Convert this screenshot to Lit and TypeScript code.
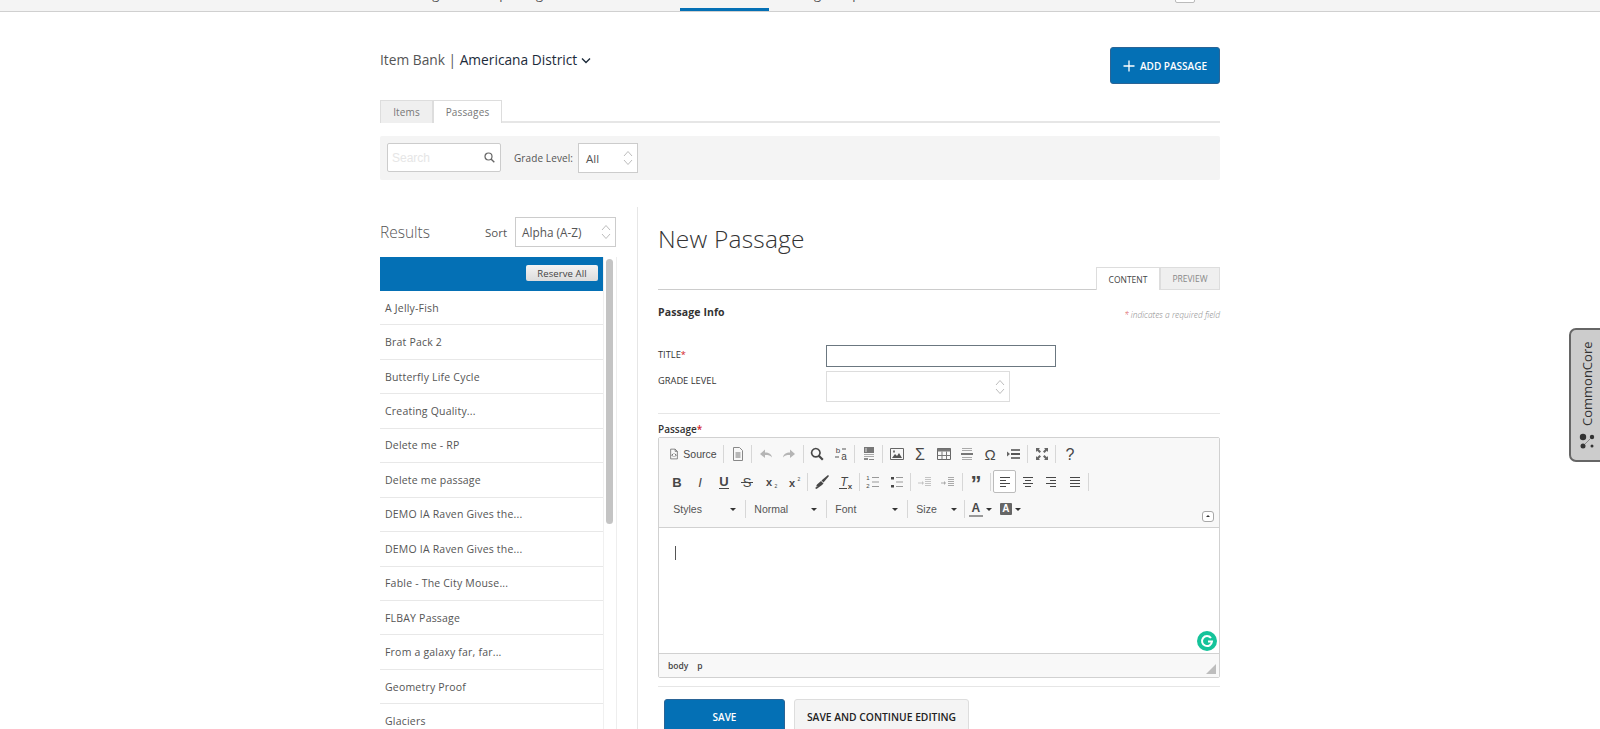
import { LitElement, html, css, svg } from "lit";
import { customElement } from "lit/decorators.js";

const ic = (body: unknown, cls = "") =>
  html`<svg class="ic ${cls}" viewBox="0 0 16 16" width="16" height="16">${body}</svg>`;
const L = (d: string, c = "#474747", w = 1) => svg`<path d=${d} fill="none" stroke=${c} stroke-width=${w}/>`;
const F = (d: string, c = "#474747") => svg`<path d=${d} fill=${c}/>`;
const T = (t: string, x: number, y: number, size: number, weight = "700", style = "normal", deco = "none") =>
  svg`<text x=${x} y=${y} font-size=${size} font-weight=${weight} font-style=${style} text-decoration=${deco} text-anchor="middle" font-family="Liberation Sans, sans-serif" fill="#474747">${t}</text>`;

const GREY = "#b5b5b5";
const icons: Record<string, unknown> = {
  source: ic([L("M3.5 1.5h6l3 3v10h-9z", "#666"), L("M9.5 1.5v3h3", "#666"), L("M7 7.5l-2 2 2 2M9 7.5l2 2-2 2", "#333")]),
  doc: ic([L("M3.5 1.5h6l3 3v10h-9z", "#888"), L("M5.5 7h5M5.5 9h5M5.5 11h5", "#777")]),
  undo: ic(F("M2 8l5-4.5v3c4 0 6.5 1.5 7 5-1.5-2-3.500-2.500-7-2.500v3z", GREY)),
  redo: ic(F("M14 8l-5-4.5v3c-4 0-6.500 1.500-7 5 1.500-2 3.500-2.500 7-2.500v3z", GREY)),
  search: ic([L("M6.800 2.500a4.200 4.200 0 1 0 .01 0z", "#474747", 1.6), L("M9.800 9.800l4 4", "#474747", 2.2)]),
  replace: ic([T("b", 5, 7, 8, "400"), T("a", 11, 14, 10, "400"), L("M9 3h4M2 11h4", "#555")]),
  blocks: ic([F("M3 1h10v6H3z", "#777"), F("M3 8h10v1H3zM3 10h10v1H3z", "#aaa"), F("M3 12h4v2H3zM8 13h5v1H8z", "#888"), F("M4 2.500h2v1H4zM4 4.500h2v1H4z", "#ddd")]),
  image: ic([L("M1.500 2.500h13v11h-13z", "#666"), F("M3 12l3-4 2 2 2-3 3 5z", "#555"), F("M4 4.500h2v2H4z", "#777")]),
  sigma: ic(T("Σ", 8, 14, 16, "400")),
  table: ic([L("M1.500 2.500h13v11h-13z", "#666"), F("M1.500 2.500h13v3h-13z", "#777"), L("M1.500 9.500h13M6 5.500v8M10.500 5.500v8", "#777")]),
  hr: ic([F("M3 2h10v1H3zM3 4h10v1H3z", "#aaa"), F("M2 7h12v2H2z", "#777"), F("M3 11h10v1H3zM3 13h10v1H3z", "#aaa")]),
  omega: ic(T("Ω", 8, 14, 15, "400")),
  pagebreak: ic([F("M5 3h9v2H5zM5 11h9v2H5z", "#777"), F("M5 7h9v2H5z", "#555"), F("M1 5.500l3 2.500-3 2.500z", "#666")]),
  max: ic([F("M2 2h4L4.800 3.200 7 5.500 5.500 7 3.200 4.800 2 6zM14 2v4l-1.200-1.200L10.500 7 9 5.500l2.200-2.300L10 2zM2 14v-4l1.200 1.200L5.500 9 7 10.500l-2.200 2.300L6 14zM14 14h-4l1.200-1.200L9 10.500 10.500 9l2.300 2.200L14 10z", "#666")]),
  help: ic(T("?", 8, 14, 16, "400")),
  b: ic(T("B", 8, 13, 13)),
  i: ic(T("I", 8, 13, 13, "400", "italic")),
  u: ic([T("U", 8, 12, 13), F("M3 14h10v1H3z")]),
  s: ic([T("S", 8, 13, 13, "400"), F("M2 8h12v1H2z")]),
  sub: ic([T("x", 6, 12, 11), T("2", 13, 14, 5, "400")]),
  sup: ic([T("x", 6, 13, 11), T("2", 13, 7, 5, "400")]),
  brush: ic([F("M14 1l1 1-5.500 6.500-2-2z"), F("M7 7l2.500 2.500-1.500 1.500L2.500 15 1 14l3-2-2 .500 1-2z")]),
  tx: ic([T("T", 7, 12, 12, "400", "italic"), F("M2 14h8v1H2z"), T("x", 13, 15, 8)]),
  ol: ic([F("M7 3h7v1H7zM7 7.500h7v1H7zM7 12h7v1H7z", "#999"), T("1", 3, 6, 6, "400"), T("2", 3, 14, 6, "400")]),
  ul: ic([F("M7 3h7v1H7zM7 7.500h7v1H7zM7 12h7v1H7z", "#999"), F("M2 3h3v2.500H2zM2 11h3v2.500H2z")]),
  outdent: ic([F("M8 3h6v1H8zM8 5h6v1H8zM8 7h6v1H8zM8 9h6v1H8zM8 11h6v1H8zM1 8.500h5v1H1z", "#c4c4c4"), F("M5 7v4l2-2z", "#c4c4c4")]),
  indent: ic([F("M8 3h6v1H8zM8 5h6v1H8zM8 7h6v1H8zM8 9h6v1H8zM8 11h6v1H8zM1 8.500h4v1H1z", "#aaa"), F("M4 7v4l2-2z", "#aaa")]),
  quote: ic(T("”", 8, 17, 22, "700")),
  left: ic(F("M3 3h10v1H3zM3 6h6v1H3zM3 9h10v1H3zM3 12h6v1H3z")),
  center: ic(F("M3 3h10v1H3zM5 6h6v1H5zM3 9h10v1H3zM5 12h6v1H5z")),
  right: ic(F("M3 3h10v1H3zM7 6h6v1H7zM3 9h10v1H3zM7 12h6v1H7z")),
  justify: ic(F("M3 3h10v1H3zM3 6h10v1H3zM3 9h10v1H3zM3 12h10v1H3z")),
};

const row1 = ["source*", "|", "doc", "|", "undo", "redo", "|", "search", "replace", "|", "blocks", "|", "image", "sigma", "table", "hr", "omega", "pagebreak", "|", "max", "|", "help"];
const row2 = ["b", "i", "u", "s", "sub", "sup", "|", "brush", "tx", "|", "ol", "ul", "|", "outdent", "indent", "|", "quote", "|", "left", "center", "right", "justify", "|"];

const rows = ["A Jelly-Fish", "Brat Pack 2", "Butterfly Life Cycle", "Creating Quality...", "Delete me - RP", "Delete me passage", "DEMO IA Raven Gives the...", "DEMO IA Raven Gives the...", "Fable - The City Mouse...", "FLBAY Passage", "From a galaxy far, far...", "Geometry Proof", "Glaciers"];

const nav = [
  ["Manage", 85], ["Reporting", 97], ["Assessments", 118], ["Item Bank", 89], ["Insight Reports", 139],
] as const;

const arrows = html`<svg class="arrows" viewBox="0 0 10 18" width="10" height="18">
  <path d="M1 7l4-4.500L9 7M1 11l4 4.500L9 11" fill="none" stroke="#bdbdbd" stroke-width="1"/></svg>`;

@customElement("app-root")
export class AppRoot extends LitElement {
  static styles = css`
    :host { display: block; position: relative; height: 729px; overflow: hidden; background: #fff; font-family: "Open Sans", sans-serif; color: #444; }
    * { box-sizing: border-box; }
    .nav { height: 12px; background: #f4f4f4; border-bottom: 1px solid #d0d0d0; position: relative; overflow: hidden; }
    .nav-in { width: 840px; margin-left: 380px; height: 11px; display: flex; align-items: flex-end; }
    .nav-item { flex: none; height: 11px; display: flex; justify-content: center; align-items: flex-end; padding-bottom: 8px; font-size: 13px; line-height: 18px; color: #555; white-space: nowrap; position: relative; }
    .nav-item.on::after { content: ""; position: absolute; left: 0; right: 0; bottom: 0; height: 3px; background: #0470b5; }
    .nav-box { position: absolute; left: 1175px; top: -6px; width: 20px; height: 9px; border: 1px solid #bbb; border-radius: 2px; background: #fff; }
    .page { width: 840px; margin-left: 380px; }
    .head { display: flex; justify-content: space-between; align-items: flex-start; padding-top: 35px; height: 88px; }
    .crumb { font-size: 13.750px; line-height: 20px; margin-top: 3px; color: #555; display: flex; align-items: center; white-space: pre; }
    .crumb b { font-weight: 400; color: #1c2b3a; }
    .crumb svg { margin-left: 4px; }
    .add { width: 110px; height: 37px; background: #0470b5; border: 1px solid #2a6496; border-radius: 3px; color: #fff; font-size: 10px; font-weight: 600; display: flex; align-items: center; justify-content: center; gap: 5px; }
    .tabs { display: flex; height: 23px; border-bottom: 2px solid #e6e6e6; }
    .tabs div { font-size: 10px; display: flex; align-items: center; justify-content: center; color: #777; letter-spacing: .15px; }
    .t-off { width: 53px; background: #efefef; border: 1px solid #ddd; border-bottom: none; height: 23px; }
    .t-on { width: 69px; background: #fff; border: 1px solid #ddd; border-bottom: none; height: 23px; padding-bottom: 1px; }
    .filter { margin-top: 13px; height: 44px; background: #f4f4f4; border-radius: 2px; padding: 7px; display: flex; align-items: flex-start; }
    .search { width: 114px; height: 29px; background: #fff; border: 1px solid #ccc; border-radius: 2px; display: flex; align-items: center; justify-content: space-between; padding: 0 5px 0 4px; font: 12px "Liberation Sans", sans-serif; color: #e6e6e6; }
    .glabel { font-size: 10px; margin-left: 13px; margin-right: 5px; line-height: 30px; color: #555; letter-spacing: .1px; }
    .sel { background: #fff; border: 1px solid #ccc; display: flex; align-items: center; justify-content: space-between; padding: 0 4px 0 7px; font-size: 11.500px; color: #555; }
    .sel.g { width: 60px; height: 30px; }
    .cols { display: flex; margin-top: 27px; }
    .left { width: 258px; flex: none; border-right: 1px solid #e6e6e6; height: 530px; padding-right: 21px; }
    .rh { display: flex; align-items: center; height: 30px; margin-top: 10px; }
    .rh .r { font-size: 15.500px; font-weight: 300; color: #555; flex: 1; }
    .rh .s { font-size: 11.500px; margin-right: 8px; color: #555; }
    .sel.sort { width: 101px; height: 30px; font-size: 11.800px; padding-left: 6px; }
    .listw { display: flex; margin-top: 9.500px; }
    .list { width: 223px; flex: none; }
    .lh { height: 34.500px; background: #0470b5; display: flex; justify-content: flex-end; align-items: center; padding-right: 5px; padding-bottom: 1px; }
    .res { width: 72px; height: 16px; background: linear-gradient(#f4f4f4, #dcdcdc); border-radius: 2px; font-size: 9.500px; color: #444; display: flex; align-items: center; justify-content: center; letter-spacing: .1px; }
    .row { height: 34.450px; border-bottom: 1px solid #e8e8e8; padding-left: 5px; font-size: 10.500px; display: flex; align-items: center; color: #555; letter-spacing: .2px; white-space: nowrap; }
    .track { width: 14px; flex: none; border-right: 1px solid #eee; position: relative; border-left: 1px solid #f0f0f0; }
    .thumb { position: absolute; left: 2px; top: 2px; width: 7px; height: 265px; background: #c4c4c4; border-radius: 4px; }
    .right { flex: 1; padding-left: 20px; }
    h1 { margin: 0; font-size: 24.500px; line-height: 34px; font-weight: 300; color: #333; letter-spacing: .2px; padding-top: 15px; height: 60px; }
    .rtabs { display: flex; justify-content: flex-end; height: 23px; border-bottom: 1px solid #ccc; }
    .rtabs div { font-size: 8.500px; display: flex; align-items: center; justify-content: center; color: #444; }
    .rt-on { width: 64px; height: 23px; background: #fff; border: 1px solid #ddd; border-bottom: none; }
    .rtabs .rt-off { width: 60px; height: 23px; background: #efefef; border: 1px solid #ddd; color: #888; }
    .pi { display: flex; justify-content: space-between; align-items: center; height: 24px; margin-top: 10px; }
    .pi b { font-size: 10.500px; font-weight: 700; color: #333; letter-spacing: .1px; }
    .pi i { font-size: 8.400px; color: #888; font-weight: 300; padding-top: 4px; }
    .req { color: #d2232a; }
    .fld { display: flex; align-items: flex-start; }
    .fld label { width: 168px; font-size: 9.300px; color: #333; }
    .f1 { margin-top: 21px; }
    .f1 label { line-height: 19px; }
    .f1 .inp { width: 230px; height: 22px; border: 1px solid #6b7780; background: #fff; }
    .f2 { margin-top: 4px; padding-bottom: 11px; border-bottom: 1px solid #e6e6e6; }
    .f2 label { line-height: 20px; }
    .sel.gl { width: 184px; height: 31px; border-color: #ddd; justify-content: flex-end; }
    .plabel { font-size: 10px; font-weight: 600; height: 23px; line-height: 30px; color: #333; }
    .ed { height: 241px; border: 1px solid #d1d1d1; border-radius: 2px; position: relative; display: flex; flex-direction: column; }
    .tb { height: 89.500px; background: #f8f8f8; border-bottom: 1px solid #d1d1d1; padding: 2px 0 0 6.300px; position: relative; }
    .tr { display: flex; height: 27.800px; align-items: center; }
    .b { width: 23.400px; height: 23px; display: flex; align-items: center; justify-content: center; flex: none; }
    .b.active { border: 1px solid #bcbcbc; background: #fff; border-radius: 2px; }
    .src { width: 56px; font: 10.500px "Liberation Sans", sans-serif; color: #474747; justify-content: flex-start; padding-left: 3px; gap: 3px; }
    .src svg { width: 12px; height: 12px; }
    .sep { width: 4.700px; height: 18px; flex: none; display: flex; justify-content: center; }
    .sep::after { content: ""; width: 1px; background: #d7d7d7; }
    .ic { display: block; }
    .combo { height: 18px; flex: none; width: 81px; border-right: 1px solid #d7d7d7; display: flex; justify-content: space-between; align-items: center; padding: 0 9px 0 8px; font: 10.500px "Liberation Sans", sans-serif; color: #555; }
    .combo.sz { width: 57px; padding-right: 7px; }
    .caret { width: 0; height: 0; border: 3px solid transparent; border-top-color: #333; border-bottom: none; flex: none; }
    .col { display: flex; align-items: center; gap: 3px; width: 30px; flex: none; justify-content: center; }
    .ca { width: 14px; height: 16px; font: 700 12px "Liberation Sans", sans-serif; color: #474747; border-bottom: 2px solid #999; text-align: center; line-height: 14px; }
    .cb { width: 12px; height: 12px; font: 700 10px "Liberation Sans", sans-serif; color: #fff; background: #666; text-align: center; line-height: 12px; border-radius: 1px; }
    .coll { position: absolute; right: 5px; bottom: 5px; width: 12px; height: 11px; border: 1px solid #a8a8a8; border-radius: 3px; background: #fff; display: flex; align-items: center; justify-content: center; }
    .coll::after { content: ""; border: 2.500px solid transparent; border-bottom-color: #333; border-top: none; }
    .body { flex: 1; background: #fff; position: relative; padding: 18px 0 0 16px; }
    .cursor { width: 1px; height: 14px; background: #555; }
    .gram { position: absolute; right: 2px; bottom: 2px; width: 20px; height: 20px; border-radius: 50%; background: #15c39a; display: flex; align-items: center; justify-content: center; }
    .ft { height: 24px; background: #f8f8f8; border-top: 1px solid #d1d1d1; display: flex; align-items: center; padding-left: 9px; gap: 9px; font-size: 8.500px; font-weight: 600; color: #444; position: relative; }
    .grip { position: absolute; right: 3px; bottom: 3px; }
    .hr { height: 1px; background: #e6e6e6; margin-top: 8px; }
    .btns { display: flex; gap: 9px; padding: 12px 0 0 6px; }
    .save { width: 121px; height: 36px; background: #0470b5; border: 1px solid #2a6496; border-radius: 3px; color: #fff; font-size: 10px; font-weight: 600; display: flex; align-items: center; justify-content: center; }
    .cont { width: 175px; height: 36px; background: #f4f4f4; border: 1px solid #ddd; border-radius: 3px; color: #222; font-size: 10.300px; font-weight: 600; display: flex; align-items: center; justify-content: center; }
    .cc { position: absolute; left: 1569px; top: 328px; width: 40px; height: 134px; background: #ccc; border: 2px solid #666; border-radius: 7px 0 0 7px; }
    .cc span { position: absolute; left: 7px; top: 7px; height: 93px; writing-mode: vertical-rl; transform: rotate(180deg); font-size: 13px; line-height: 18px; color: #333; text-align: center; }
    .cc svg { position: absolute; left: 8px; top: 103px; }
  `;

  private item(k: string) {
    if (k === "|") return html`<span class="sep"></span>`;
    if (k === "source*") return html`<span class="b src">${icons.source}Source</span>`;
    return html`<span class="b ${k === "left" ? "active" : ""}">${icons[k]}</span>`;
  }

  render() {
    return html`
      <div class="nav">
        <div class="nav-in">
          ${nav.map(([t, w]) => html`<div class="nav-item ${t === "Item Bank" ? "on" : ""}" style="width:${w}px">${t}</div>`)}
        </div>
        <div class="nav-box"></div>
      </div>
      <div class="page">
        <div class="head">
          <div class="crumb">Item Bank | <b>Americana District</b>
            <svg width="10" height="7" viewBox="0 0 10 7"><path d="M1 1.500l4 4 4-4" fill="none" stroke="#1c2b3a" stroke-width="1.400"/></svg>
          </div>
          <div class="add">
            <svg width="12" height="12" viewBox="0 0 12 12"><path d="M6 .5v11M.5 6h11" stroke="#fff" stroke-width="1.300"/></svg>
            ADD PASSAGE
          </div>
        </div>
        <div class="tabs"><div class="t-off">Items</div><div class="t-on">Passages</div></div>
        <div class="filter">
          <div class="search">Search
            <svg width="11" height="11" viewBox="0 0 11 11"><circle cx="4.500" cy="4.500" r="3.500" fill="none" stroke="#666" stroke-width="1.200"/><path d="M7 7l3.300 3.300" stroke="#666" stroke-width="1.400"/></svg>
          </div>
          <div class="glabel">Grade Level:</div>
          <div class="sel g">All ${arrows}</div>
        </div>
        <div class="cols">
          <div class="left">
            <div class="rh"><span class="r">Results</span><span class="s">Sort</span><div class="sel sort">Alpha (A-Z) ${arrows}</div></div>
            <div class="listw">
              <div class="list">
                <div class="lh"><div class="res">Reserve All</div></div>
                ${rows.map((r) => html`<div class="row">${r}</div>`)}
              </div>
              <div class="track"><div class="thumb"></div></div>
            </div>
          </div>
          <div class="right">
            <h1>New Passage</h1>
            <div class="rtabs"><div class="rt-on">CONTENT</div><div class="rt-off">PREVIEW</div></div>
            <div class="pi"><b>Passage Info</b><i><span class="req">*</span> indicates a required field</i></div>
            <div class="fld f1"><label>TITLE<span class="req">*</span></label><div class="inp"></div></div>
            <div class="fld f2"><label>GRADE LEVEL</label><div class="sel gl">${arrows}</div></div>
            <div class="plabel">Passage<span class="req">*</span></div>
            <div class="ed">
              <div class="tb">
                <div class="tr">${row1.map((k) => this.item(k))}</div>
                <div class="tr">${row2.map((k) => this.item(k))}</div>
                <div class="tr">
                  <div class="combo">Styles<span class="caret"></span></div>
                  <div class="combo">Normal<span class="caret"></span></div>
                  <div class="combo">Font<span class="caret"></span></div>
                  <div class="combo sz">Size<span class="caret"></span></div>
                  <div class="col"><span class="ca">A</span><span class="caret"></span></div>
                  <div class="col"><span class="cb">A</span><span class="caret"></span></div>
                </div>
                <span class="coll"></span>
              </div>
              <div class="body">
                <div class="cursor"></div>
                <div class="gram"><svg width="14" height="14" viewBox="0 0 14 14"><path d="M11 4a5 5 0 1 0 1 3.500H8" fill="none" stroke="#fff" stroke-width="2"/></svg></div>
              </div>
              <div class="ft"><span>body</span><span>p</span>
                <svg class="grip" width="10" height="10" viewBox="0 0 10 10"><path d="M10 0v10H0z" fill="#bdbdbd"/></svg>
              </div>
            </div>
            <div class="hr"></div>
            <div class="btns"><div class="save">SAVE</div><div class="cont">SAVE AND CONTINUE EDITING</div></div>
          </div>
        </div>
      </div>
      <div class="cc"><span>CommonCore</span>
        <svg width="18" height="18" viewBox="0 0 18 18">
          <circle cx="4" cy="4" r="3.200" fill="#333"/><circle cx="13" cy="4" r="2.200" fill="#333"/>
          <circle cx="4" cy="13" r="2.500" fill="#333"/><circle cx="13" cy="13" r="1.500" fill="#333"/>
          <path d="M11 6L6 11" stroke="#888" stroke-width="1"/>
        </svg>
      </div>
    `;
  }
}
